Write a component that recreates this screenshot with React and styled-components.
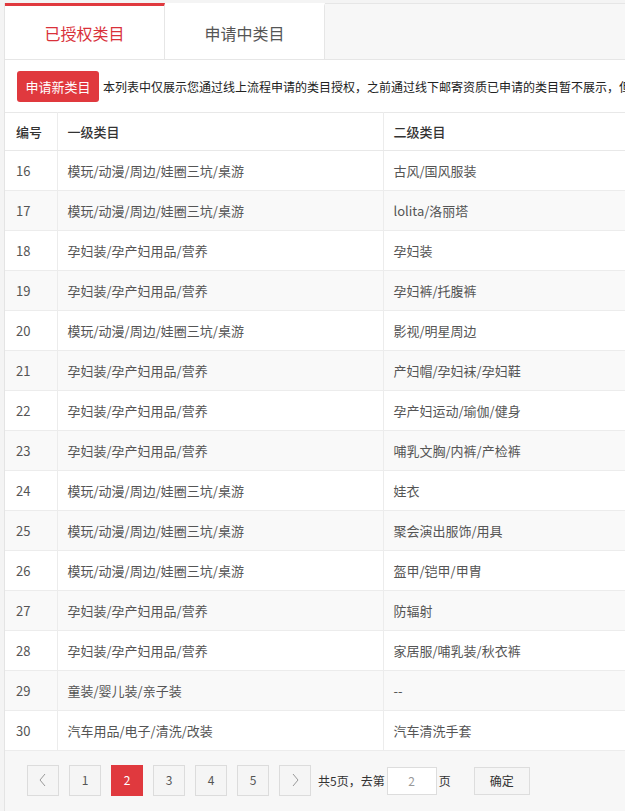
import React from "react";
import styled, { createGlobalStyle } from "styled-components";

const GlobalStyle = createGlobalStyle`
	body {
		margin: 0;
		background: #f4f4f4;
		font-family: "Noto Sans CJK SC", "Noto Sans", sans-serif;
		color: #333;
	}
`;

const Page = styled.div`
	margin: 3px 0 0 4px;
	border-left: 1px solid #e4e4e4;
	width: 621px;
	overflow: hidden;
`;

const TabBar = styled.div`
	display: flex;
	height: 55px;
	background: #f7f7f7;
	border-top: 1px solid #e6e6e6;
	border-bottom: 1px solid #e6e6e6;
`;

const Tab = styled.div`
	width: 160px;
	box-sizing: border-box;
	display: flex;
	align-items: center;
	justify-content: center;
	background: #fff;
	border-right: 1px solid #e6e6e6;
	border-top: 3px solid ${(p) => (p.$active ? "#e0393e" : "#fff")};
	margin-top: -1px;
	height: 56px;
	font-size: 16px;
	color: ${(p) => (p.$active ? "#d9313a" : "#555")};
`;

const Panel = styled.div`
	background: #fff;
`;

const Toolbar = styled.div`
	display: flex;
	align-items: center;
	gap: 4px;
	padding: 11px 0 10px 12px;
	white-space: nowrap;
	overflow: hidden;
`;

const RedButton = styled.button`
	flex: none;
	width: 82px;
	height: 31px;
	border: none;
	border-radius: 3px;
	background: #e0393e;
	color: #fff;
	font-family: inherit;
	font-size: 13px;
	padding: 0;
`;

const Notice = styled.span`
	font-size: 12px;
	color: #222;
`;

const Table = styled.table`
	border-collapse: collapse;
	width: 900px;
	table-layout: fixed;
	font-size: 13px;
`;

const Th = styled.th`
	box-sizing: border-box;
	height: 38px;
	text-align: left;
	font-weight: 500;
	color: #333;
	padding: 0 0 1px ${(p) => p.$pad || 10}px;
	border-top: 1px solid #e8e8e8;
	border-bottom: 1px solid #e8e8e8;
	border-right: 1px solid #ececec;
	width: ${(p) => p.$w || "auto"};
`;

const Tr = styled.tr`
	background: ${(p) => (p.$striped ? "#f9f9f9" : "#fff")};
`;

const Td = styled.td`
	box-sizing: border-box;
	height: 40px;
	padding: 0 0 0 ${(p) => p.$pad || 10}px;
	color: #555;
	border-bottom: 1px solid #ececec;
	border-right: 1px solid #ececec;
`;

const Pager = styled.div`
	display: flex;
	align-items: center;
	background: #f7f7f7;
	padding: 14px 0 15px 22px;
	font-size: 12px;
	color: #333;
`;

const PageBtn = styled.div`
	width: 32px;
	height: 31px;
	box-sizing: border-box;
	margin-right: 10px;
	padding-bottom: 2px;
	display: flex;
	align-items: center;
	justify-content: center;
	border: 1px solid ${(p) => (p.$active ? "#e0393e" : "#dcdcdc")};
	background: ${(p) => (p.$active ? "#e0393e" : "#f5f5f5")};
	color: ${(p) => (p.$active ? "#fff" : "#555")};
	font-size: 12px;
`;

const JumpText = styled.span`
	margin-left: -3px;
`;

const JumpInput = styled.div`
	width: 50px;
	height: 28px;
	box-sizing: border-box;
	margin: 0 2px;
	border: 1px solid #ddd;
	background: #fff;
	display: flex;
	align-items: center;
	justify-content: center;
	color: #999;
`;

const OkButton = styled.div`
	width: 56px;
	height: 28px;
	box-sizing: border-box;
	margin-left: 23px;
	border: 1px solid #ddd;
	background: #f5f5f5;
	display: flex;
	align-items: center;
	justify-content: center;
	color: #333;
`;

const Chevron = ({ dir }) => (
	<svg width="10" height="16" viewBox="0 0 10 16">
		<path
			d={dir === "left" ? "M7 2 L2 8 L7 14" : "M3 2 L8 8 L3 14"}
			fill="none"
			stroke="#999"
			strokeWidth="1"
		/>
	</svg>
);

const TOY = "模玩/动漫/周边/娃圈三坑/桌游";
const MOM = "孕妇装/孕产妇用品/营养";

const rows = [
	[16, TOY, "古风/国风服装"],
	[17, TOY, "lolita/洛丽塔"],
	[18, MOM, "孕妇装"],
	[19, MOM, "孕妇裤/托腹裤"],
	[20, TOY, "影视/明星周边"],
	[21, MOM, "产妇帽/孕妇袜/孕妇鞋"],
	[22, MOM, "孕产妇运动/瑜伽/健身"],
	[23, MOM, "哺乳文胸/内裤/产检裤"],
	[24, TOY, "娃衣"],
	[25, TOY, "聚会演出服饰/用具"],
	[26, TOY, "盔甲/铠甲/甲胄"],
	[27, MOM, "防辐射"],
	[28, MOM, "家居服/哺乳装/秋衣裤"],
	[29, "童装/婴儿装/亲子装", "--"],
	[30, "汽车用品/电子/清洗/改装", "汽车清洗手套"],
];

const App = () => {
	return (
		<>
			<GlobalStyle />
			<Page>
				<TabBar>
					<Tab $active>已授权类目</Tab>
					<Tab>申请中类目</Tab>
				</TabBar>
				<Panel>
					<Toolbar>
						<RedButton>申请新类目</RedButton>
						<Notice>
							本列表中仅展示您通过线上流程申请的类目授权，之前通过线下邮寄资质已申请的类目暂不展示，但不影响您正常发布商品。
						</Notice>
					</Toolbar>
					<Table>
						<thead>
							<tr>
								<Th $w="52px" $pad={11}>编号</Th>
								<Th $w="326px">一级类目</Th>
								<Th>二级类目</Th>
							</tr>
						</thead>
						<tbody>
							{rows.map(([id, first, second], i) => (
								<Tr key={id} $striped={i % 2 === 1}>
									<Td $pad={11}>{id}</Td>
									<Td>{first}</Td>
									<Td>{second}</Td>
								</Tr>
							))}
						</tbody>
					</Table>
				</Panel>
				<Pager>
					<PageBtn>
						<Chevron dir="left" />
					</PageBtn>
					{[1, 2, 3, 4, 5].map((n) => (
						<PageBtn key={n} $active={n === 2}>
							{n}
						</PageBtn>
					))}
					<PageBtn>
						<Chevron dir="right" />
					</PageBtn>
					<JumpText>共5页，去第</JumpText>
					<JumpInput>2</JumpInput>
					<span>页</span>
					<OkButton>确定</OkButton>
				</Pager>
			</Page>
		</>
	);
};

export default App;
